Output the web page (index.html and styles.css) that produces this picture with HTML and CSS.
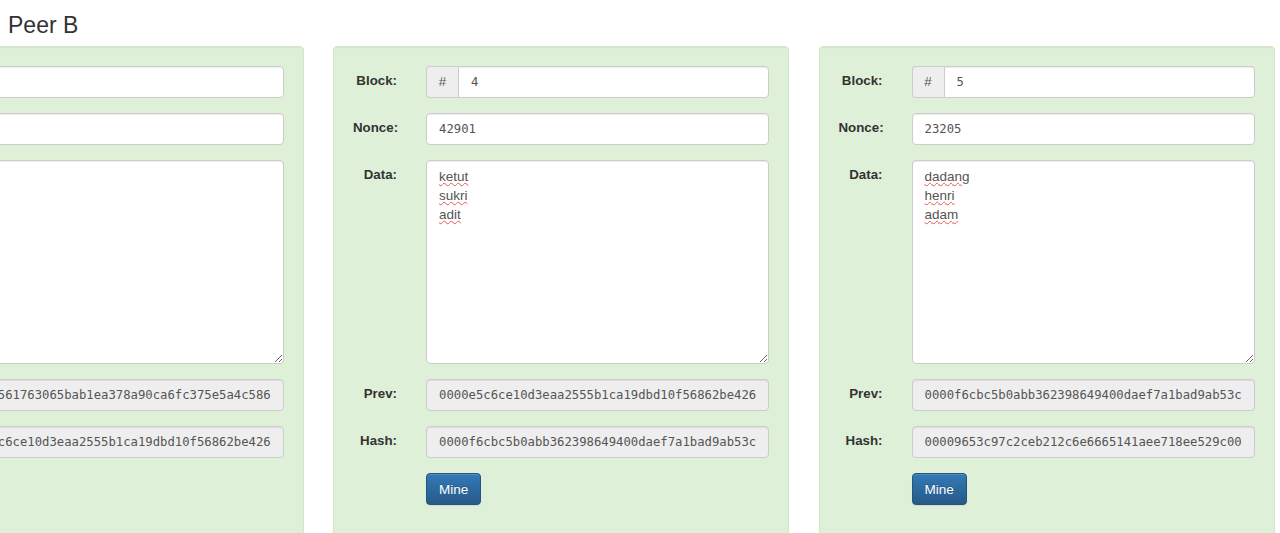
FILE: index.html
```html
<!DOCTYPE html>
<html lang="en">
<head>
<meta charset="utf-8">
<title>Peer B</title>
<link rel="stylesheet" href="styles.css">
</head>
<body>
<h3 class="peer-title">Peer B</h3>
<div class="chain">
  <div class="well">
    <form class="block-form">
      <label class="lbl">Block:</label>
      <div class="input-group"><span class="addon">#</span><input class="field" value="3"></div>
      <label class="lbl">Nonce:</label>
      <input class="field" value="18214">
      <label class="lbl">Data:</label>
      <textarea class="field data" spellcheck="false"></textarea>
      <label class="lbl">Prev:</label>
      <input class="field hash" readonly value="0000a4561763065bab1ea378a90ca6fc375e5a4c5861d2f07e9b3c48a5e60f2b">
      <label class="lbl">Hash:</label>
      <input class="field hash" readonly value="0000e5c6ce10d3eaa2555b1ca19dbd10f56862be4267c91a0d35e8b24f6c1a09">
      <span class="spacer"></span>
      <div class="actions"><button type="button" class="btn-mine">Mine</button></div>
    </form>
  </div>
  <div class="well">
    <form class="block-form">
      <label class="lbl">Block:</label>
      <div class="input-group"><span class="addon">#</span><input class="field" value="4"></div>
      <label class="lbl">Nonce:</label>
      <input class="field" value="42901">
      <label class="lbl">Data:</label>
      <textarea class="field data" spellcheck="false">ketut
sukri
adit</textarea>
      <label class="lbl">Prev:</label>
      <input class="field hash" readonly value="0000e5c6ce10d3eaa2555b1ca19dbd10f56862be4267c91a0d35e8b24f6c1a09">
      <label class="lbl">Hash:</label>
      <input class="field hash" readonly value="0000f6cbc5b0abb362398649400daef7a1bad9ab53ce2d7f01b9a4c35e86d21f">
      <span class="spacer"></span>
      <div class="actions"><button type="button" class="btn-mine">Mine</button></div>
    </form>
  </div>
  <div class="well">
    <form class="block-form">
      <label class="lbl">Block:</label>
      <div class="input-group"><span class="addon">#</span><input class="field" value="5"></div>
      <label class="lbl">Nonce:</label>
      <input class="field" value="23205">
      <label class="lbl">Data:</label>
      <textarea class="field data" spellcheck="false">dadang
henri
adam</textarea>
      <label class="lbl">Prev:</label>
      <input class="field hash" readonly value="0000f6cbc5b0abb362398649400daef7a1bad9ab53ce2d7f01b9a4c35e86d21f">
      <label class="lbl">Hash:</label>
      <input class="field hash" readonly value="00009653c97c2ceb212c6e6665141aee718ee529c00b3f18a6d2e49c07a5d13e">
      <span class="spacer"></span>
      <div class="actions"><button type="button" class="btn-mine">Mine</button></div>
    </form>
  </div>
</div>
</body>
</html>
```

FILE: styles.css
```css
html, body {
  margin: 0;
  padding: 0;
  overflow: hidden;
  background: #fff;
}

body {
  font-family: "Liberation Sans", Arial, sans-serif;
  font-size: 13.3px;
  line-height: 19px;
  color: #333;
}

.peer-title {
  font-size: 23px;
  line-height: 26px;
  font-weight: normal;
  margin: 12px 0 8px;
  padding-left: 8px;
  color: #333;
}

.chain {
  display: flex;
  align-items: flex-start;
  gap: 29.5px;
  margin-left: -152.5px;
}

.well {
  flex: 0 0 456px;
  box-sizing: border-box;
  background: #dff0d8;
  border: 1px solid #d3e6c8;
  border-radius: 4px;
  padding: 19px 19px 34px;
  box-shadow: inset 0 1px 1px rgba(0, 0, 0, 0.05);
}

.block-form {
  display: grid;
  grid-template-columns: 44px 1fr;
  column-gap: 29px;
  row-gap: 15px;
  margin: 0;
}

.lbl {
  text-align: right;
  font-weight: bold;
  padding-top: 5px;
  white-space: nowrap;
  direction: rtl;
  unicode-bidi: plaintext;
  color: #333;
}

.field {
  display: block;
  box-sizing: border-box;
  width: 100%;
  height: 32px;
  margin: 0;
  padding: 6px 12px;
  border: 1px solid #ccc;
  border-radius: 4px;
  background: #fff;
  color: #555;
  font-family: "DejaVu Sans Mono", "Liberation Mono", monospace;
  font-size: 12.25px;
  box-shadow: inset 0 1px 1px rgba(0, 0, 0, 0.075);
  outline: none;
}

.hash {
  background: #eee;
}

.data {
  height: 204px;
  font-family: "Liberation Sans", Arial, sans-serif;
  font-size: 13.5px;
  line-height: 19px;
  resize: vertical;
  text-decoration: underline wavy #e25a55;
  text-decoration-thickness: 1px;
  text-underline-offset: 1px;
}

.input-group {
  display: flex;
}

.addon {
  flex: 0 0 32px;
  box-sizing: border-box;
  height: 32px;
  border: 1px solid #ccc;
  border-right: 0;
  border-radius: 4px 0 0 4px;
  background: #eee;
  color: #555;
  text-align: center;
  line-height: 30px;
  font-size: 13.3px;
}

.input-group .field {
  flex: 1 1 auto;
  min-width: 0;
  border-radius: 0 4px 4px 0;
}

.btn-mine {
  height: 32px;
  padding: 0 12px;
  font-family: "Liberation Sans", Arial, sans-serif;
  font-size: 13.5px;
  color: #fff;
  background-color: #265a88;
  background-image: linear-gradient(to bottom, #337ab7 0, #265a88 100%);
  border: 1px solid #245580;
  border-radius: 4px;
  text-shadow: 0 -1px 0 rgba(0, 0, 0, 0.2);
  box-shadow: inset 0 1px 0 rgba(255, 255, 255, 0.15), 0 1px 1px rgba(0, 0, 0, 0.075);
  cursor: pointer;
}
```
